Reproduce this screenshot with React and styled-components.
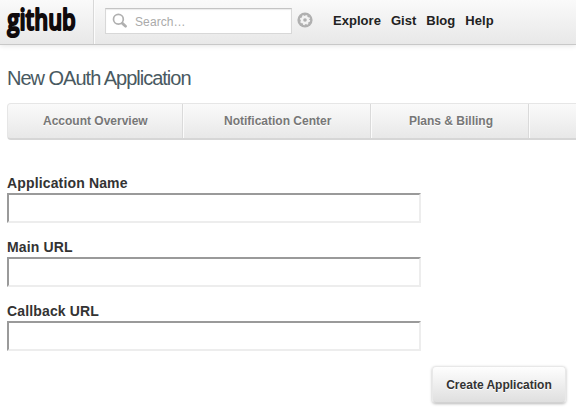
import React from "react";
import styled, { createGlobalStyle } from "styled-components";

const GlobalStyle = createGlobalStyle`
  * { box-sizing: border-box; }
  body {
    margin: 0;
    background: #fff;
    overflow: hidden;
    font-family: "Liberation Sans", Arial, sans-serif;
  }
`;

const Page = styled.div`
  width: 576px;
  height: 417px;
  overflow: hidden;
`;

const Header = styled.header`
  display: flex;
  height: 45px;
  background: linear-gradient(#fafafa, #e8e8e8);
  border-bottom: 1px solid #c8c8c8;
  box-shadow: 0 1px 5px rgba(0, 0, 0, 0.1);
`;

const LogoLink = styled.a`
  flex: none;
  width: 94px;
  height: 44px;
  border-right: 1px solid #d8d8d8;
  box-shadow: 1px 0 0 #fcfcfc;

  svg { display: block; }
`;

const Search = styled.label`
  flex: none;
  display: flex;
  align-items: center;
  width: 187px;
  height: 26px;
  margin: 8px 0 0 11px;
  padding-left: 6px;
  background: #fff;
  border: 1px solid #d8d8d8;
  border-top-color: #c4c4c4;
  box-shadow: inset 0 1px 1px #ececec;
`;

const SearchInput = styled.input`
  width: 140px;
  margin: 2px 0 0 7px;
  padding: 0;
  border: 0;
  outline: 0;
  background: transparent;
  font: 12px "Liberation Sans", Arial, sans-serif;
  letter-spacing: 0.1px;

  &::placeholder { color: #aaa; opacity: 1; }
`;

const Settings = styled.a`
  flex: none;
  width: 16px;
  height: 16px;
  margin: 12px 0 0 5px;

  svg { display: block; }
`;

const Nav = styled.nav`
  display: flex;
  gap: 10px;
  margin: 13px 0 0 20px;
`;

const NavLink = styled.a`
  font-size: 13px;
  line-height: 15px;
  font-weight: bold;
  letter-spacing: 0.03px;
  color: #222;
`;

const Title = styled.h1`
  margin: 21px 0 0 7px;
  font-size: 20px;
  line-height: 24px;
  font-weight: normal;
  letter-spacing: -1px;
  color: #495961;
`;

const Tabs = styled.nav`
  display: flex;
  width: 620px;
  height: 37px;
  margin: 13px 0 0 7px;
  background: linear-gradient(#fafafa, #e8e8e8);
  border: 1px solid #e6e6e6;
  border-bottom: 2px solid #d6d6d6;
  border-radius: 4px;
`;

const Tab = styled.a`
  flex: none;
  width: ${(p) => p.$width}px;
  padding-left: ${(p) => p.$indent}px;
  border-right: 1px solid #dadada;
  box-shadow: 1px 0 0 #fbfbfb;
  font-size: 12px;
  line-height: 34px;
  font-weight: bold;
  color: #777;
  text-shadow: 0 1px 0 #fff;
`;

const Form = styled.form`
  display: flex;
  flex-direction: column;
  gap: 18px;
  margin: 35px 0 0 7px;
`;

const Field = styled.label`
  display: flex;
  flex-direction: column;
  height: 48px;
  margin-bottom: -2px;
`;

const FieldName = styled.span`
  font-size: 14px;
  line-height: 16px;
  font-weight: bold;
  letter-spacing: 0.15px;
  color: #333;
`;

const TextInput = styled.input`
  flex: none;
  width: 414px;
  height: 30px;
  margin: 2px 0 0;
  border: 2px solid;
  border-color: #9a9a9a #ededed #ededed #9a9a9a;
  background: #fff;
`;

const SubmitButton = styled.button`
  width: 134px;
  height: 37px;
  margin: -1px 0 0 425px;
  padding: 0;
  border: 1px solid #e8e8e8;
  border-bottom-color: #d2d2d2;
  border-radius: 4px;
  background: linear-gradient(#fefefe, #dfdfdf);
  box-shadow: 0 1px 3px rgba(0, 0, 0, 0.28);
  font: bold 12px "Liberation Sans", Arial, sans-serif;
  color: #333;
  text-shadow: 0 1px 0 #fff;
`;

const LogoText = styled.text`
  font-family: "Open Sans", "Noto Sans", sans-serif;
  font-size: 28.5px;
  font-weight: 600;
  fill: #100a0c;
  stroke: #100a0c;
  stroke-width: 2px;
  stroke-linejoin: round;
`;

const Logo = () => (
  <svg width="93" height="44" role="img" aria-label="github">
    <g transform="translate(7.3 30.2) scale(0.77 1)">
      <LogoText>github</LogoText>
    </g>
  </svg>
);

const SearchIcon = () => (
  <svg width="16" height="16" viewBox="0 0 16 16" fill="none" stroke="#b0b0b0">
    <circle cx="6.4" cy="6.3" r="4.9" strokeWidth="1.7" />
    <path d="M10.4 10.4 L13.6 13.2" strokeWidth="2.8" strokeLinecap="round" />
  </svg>
);

const GearIcon = () => (
  <svg width="16" height="16" viewBox="0 0 16 16">
    <circle cx="8" cy="8" r="7.6" fill="#b0b0b0" />
    <circle cx="8" cy="8" r="4.3" fill="#f3f3f3" />
    <circle cx="8" cy="8" r="4.5" fill="none" stroke="#f3f3f3" strokeWidth="1.3" strokeDasharray="1.7671 1.7671" />
    <circle cx="8" cy="8" r="1.8" fill="#b0b0b0" />
  </svg>
);

const links = ["Explore", "Gist", "Blog", "Help"];
const tabs = [
  ["Account Overview", 175, 35],
  ["Notification Center", 188, 41],
  ["Plans & Billing", 158, 38],
];
const fields = ["Application Name", "Main URL", "Callback URL"];

export default function App() {
  return (
    <Page>
      <GlobalStyle />
      <Header>
        <LogoLink><Logo /></LogoLink>
        <Search>
          <SearchIcon />
          <SearchInput placeholder="Search…" />
        </Search>
        <Settings><GearIcon /></Settings>
        <Nav>{links.map((l) => <NavLink key={l}>{l}</NavLink>)}</Nav>
      </Header>
      <Title>New OAuth Application</Title>
      <Tabs>
        {tabs.map(([name, width, indent]) => (
          <Tab key={name} $width={width} $indent={indent}>{name}</Tab>
        ))}
      </Tabs>
      <Form>
        {fields.map((name) => (
          <Field key={name}>
            <FieldName>{name}</FieldName>
            <TextInput />
          </Field>
        ))}
        <SubmitButton type="button">Create Application</SubmitButton>
      </Form>
    </Page>
  );
}
